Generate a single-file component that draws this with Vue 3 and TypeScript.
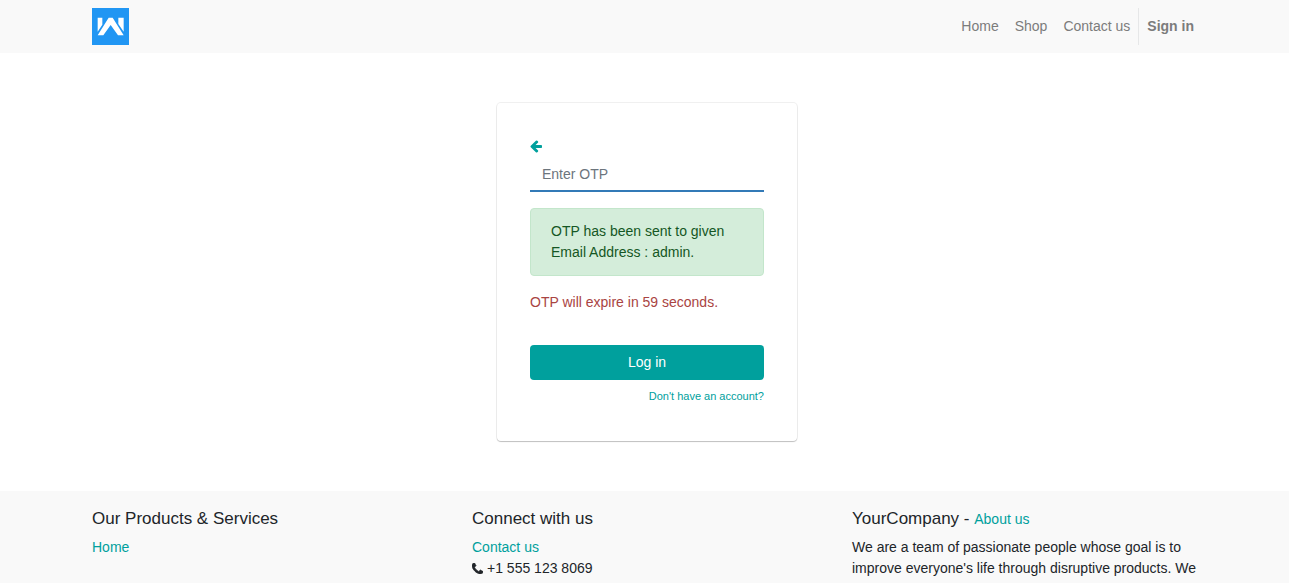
<script setup lang="ts">
import { ref } from 'vue'

interface NavLink {
  label: string
  href: string
}

const navLinks: NavLink[] = [
  { label: 'Home', href: '#home' },
  { label: 'Shop', href: '#shop' },
  { label: 'Contact us', href: '#contact' },
]

const otp = ref('')
const account = 'admin'
const secondsLeft = ref(59)
</script>

<template>
  <div class="page">
    <header class="bar">
      <div class="container header-row">
        <a class="brand" href="#home" aria-label="Homepage">
          <svg width="37" height="37" viewBox="0 0 111 111" aria-hidden="true">
            <rect width="111" height="111" fill="#2196f3" />
            <path d="M17 29H31V50L17 71Z M95 29H79V48L95 71Z" fill="#fff" />
            <path d="M17 82L50 29H62L95 82H78L56 51L34 82Z" fill="#fff" />
          </svg>
        </a>
        <nav class="nav" aria-label="Main">
          <a v-for="link in navLinks" :key="link.label" :href="link.href">{{ link.label }}</a>
          <a class="sign-in" href="#login">Sign in</a>
        </nav>
      </div>
    </header>

    <main>
      <form class="card" @submit.prevent>
        <a class="back" href="#back" aria-label="Back">
          <svg width="12" height="15" viewBox="0 0 1536 1920" aria-hidden="true">
            <path fill="currentColor" d="M1536 896v128q0 53-32.500 90.500t-84.500 37.500h-704l293 294q38 36 38 90t-38 90l-75 76q-37 37-90 37-52 0-91-37l-651-652q-37-37-37-90 0-52 37-91l651-650q38-38 91-38 52 0 90 38l75 74q38 38 38 91t-38 91l-293 293h704q52 0 84.500 37.500t32.500 90.500z" />
          </svg>
        </a>
        <input v-model="otp" class="otp" type="text" aria-label="Enter OTP" placeholder="Enter OTP" />
        <p class="notice" role="status">OTP has been sent to given Email Address : {{ account }}.</p>
        <p class="expiry">OTP will expire in {{ secondsLeft }} seconds.</p>
        <button class="submit" type="submit">Log in</button>
        <a class="signup" href="#signup">Don't have an account?</a>
      </form>
    </main>

    <footer class="bar">
      <div class="container columns">
        <section>
          <h5>Our Products &amp; Services</h5>
          <a href="#home">Home</a>
        </section>
        <section>
          <h5>Connect with us</h5>
          <a href="#contact">Contact us</a>
          <div class="phone">
            <svg width="11" height="11" viewBox="0 0 1408 1408" aria-hidden="true">
              <path fill="currentColor" stroke="currentColor" stroke-width="90" d="M1408 1112q0 27-10 70.500t-21 68.500q-21 50-122 106-94 51-186 51-27 0-53-3.500t-57.500-12.500-47-14.500-55.500-20.500-49-18q-98-35-175-83-127-79-264-216t-216-264q-48-77-83-175-3-9-18-49t-20.500-55.500-14.500-47-12.500-57.500-3.500-53q0-92 51-186 56-101 106-122 25-11 68.500-21t70.500-10q14 0 21 3 18 6 53 76 11 19 30 54t35 63.500 31 53.500q3 4 17.500 25t21.500 35.500 7 28.500q0 20-28.500 50t-62 55-62 53-28.500 46q0 9 5 22.500t8.500 20.500 14 24 11.500 19q76 137 174 235t235 174q2 1 19 11.500t24 14 20.500 8.500 22.500 5q18 0 46-28.500t53-62 55-62 50-28.500q14 0 28.500 7t35.500 21.500 25 17.500q25 15 53.500 31t63.500 35 54 30q70 35 76 53 3 7 3 21z" />
            </svg>
            <span>+1 555 123 8069</span>
          </div>
        </section>
        <section>
          <h5>YourCompany - <small><a href="#about">About us</a></small></h5>
          <p>We are a team of passionate people whose goal is to improve everyone's life through disruptive products. We</p>
        </section>
      </div>
    </footer>
  </div>
</template>

<style>
body {
  margin: 0;
}
</style>

<style scoped>
* {
  box-sizing: border-box;
}

.page {
  display: flex;
  flex-direction: column;
  min-height: 100vh;
  background: #fff;
  color: #212529;
  font: 14px/21px "Liberation Sans", Arial, sans-serif;
}

a {
  color: #00a09d;
  text-decoration: none;
}

p,
h5 {
  margin: 0;
}

svg {
  display: block;
}

.bar {
  padding-left: 3px;
  background: #f9f9f9;
}

.container {
  max-width: 1140px;
  margin: 0 auto;
  padding: 0 16px;
}

.header-row {
  display: flex;
  align-items: center;
  justify-content: space-between;
  padding: 8px 14px 8px 16px;
}

.nav {
  display: flex;
}

.nav a {
  padding: 8px;
  color: #7c7c7c;
}

.nav .sign-in {
  border-left: 1px solid #e6e7e8;
  font-weight: bold;
}

main {
  display: flex;
  justify-content: center;
  padding: 50px 0 50px 5px;
}

.card {
  display: flex;
  flex-direction: column;
  width: 300px;
  padding: 33px 33px 36px;
  border-radius: 4px;
  box-shadow: 0 0 0 1px rgba(0, 0, 0, 0.06), 0 1px 1px rgba(0, 0, 0, 0.2);
}

.back {
  display: flex;
  align-items: center;
  align-self: flex-start;
  height: 21px;
}

.otp {
  width: 100%;
  height: 35px;
  padding: 0 12px;
  border: 0;
  border-bottom: 2px solid #337ab7;
  background: transparent;
  color: #495057;
  font: inherit;
  outline: none;
}

.otp::placeholder {
  color: #6c757d;
  opacity: 1;
}

.notice {
  margin-top: 16px;
  padding: 12px 20px;
  border: 1px solid #c3e6cb;
  border-radius: 4px;
  background: #d4edda;
  color: #155724;
}

.expiry {
  margin: 16px 0 32px;
  color: #a94442;
}

.submit {
  height: 35px;
  border: 0;
  border-radius: 4px;
  background: #00a09d;
  color: #fff;
  font: inherit;
}

.signup {
  align-self: flex-end;
  margin-top: 8px;
  font-size: 11px;
  line-height: 17px;
}

footer {
  flex: 1;
}

.columns {
  display: grid;
  grid-template-columns: repeat(3, 1fr);
  gap: 32px;
  padding-top: 17px;
}

h5 {
  margin-bottom: 8px;
  font-size: 17px;
  font-weight: normal;
  line-height: 21px;
}

small {
  font-size: 14px;
  line-height: 14px;
}

.phone {
  display: flex;
  align-items: center;
  gap: 4px;
}
</style>
